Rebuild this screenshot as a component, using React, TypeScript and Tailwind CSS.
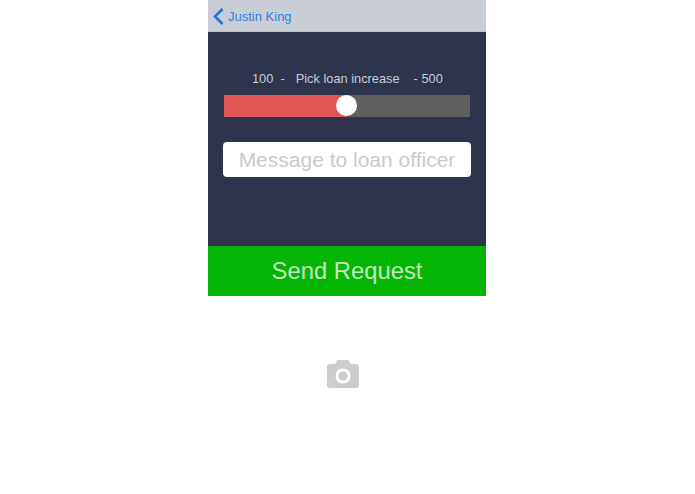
const FONT = "font-['Liberation_Sans',Arial,sans-serif]";

function BackChevron() {
  return (
    <svg width="11" height="17" viewBox="0 0 11 17" fill="none" className="mt-[1px] shrink-0">
      <path d="M9.500 1 2 8.500l7.500 7.500" stroke="#1478e6" strokeWidth="2.500" />
    </svg>
  );
}

function CameraPlaceholder() {
  return (
    <svg width="32" height="28" viewBox="0 0 32 28" className="block">
      <path
        fillRule="evenodd"
        fill="#cdcdcd"
        d="M3 4h5.500l1-2.600C9.900.5 10.600 0 11.500 0h9c.9 0 1.600.5 2 1.400l1 2.600H29c1.700 0 3 1.300 3 3v18c0 1.700-1.300 3-3 3H3c-1.700 0-3-1.300-3-3V7c0-1.700 1.300-3 3-3Zm13 4.500a7.500 7.500 0 1 0 0 15 7.500 7.500 0 0 0 0-15Zm0 2.700a4.800 4.800 0 1 1 0 9.600 4.800 4.800 0 0 1 0-9.600Z"
      />
    </svg>
  );
}

export default function App() {
  return (
    <div className={`${FONT} flex h-[494px] w-[694px] flex-col items-center overflow-hidden bg-white`}>
      <div className="flex w-[278px] flex-col">
        <nav className="flex h-[32px] items-center gap-[4px] border-b border-[#bfc3cb] bg-[#c9cdd5] pl-[5px]">
          <BackChevron />
          <span className="mt-[2px] text-[13px] text-[#2a82e2]">Justin King</span>
        </nav>

        <main className="flex h-[214px] flex-col bg-[#2e344c] px-[15px] pt-[38px]">
          <div className="flex h-[18px] items-center whitespace-pre text-[12.8px] text-[#c9ccd3]">
            <span className="ml-[29px]">100  -</span>
            <span className="ml-[11px]">Pick loan increase</span>
            <span className="ml-[14px]">- 500</span>
          </div>

          <div className="relative mx-px mt-[7px] flex h-[22px] bg-[#5f5f5f]">
            <div className="w-[123px] bg-[#e05555]" />
            <div className="absolute left-[112px] top-[0px] h-[21px] w-[21px] rounded-full bg-white" />
          </div>

          <div className="mt-[25px] flex h-[35px] items-center justify-center rounded-[4px] bg-white pt-[1px] text-[21px] text-[#cacacf]">
            Message to loan officer
          </div>
        </main>

        <button
          type="button"
          className="flex h-[50px] items-center justify-center bg-[#05b505] text-[23.8px] text-[#c3e8c0]"
        >
          Send Request
        </button>
      </div>

      <div className="mt-[64px] -translate-x-[4px]">
        <CameraPlaceholder />
      </div>
    </div>
  );
}
